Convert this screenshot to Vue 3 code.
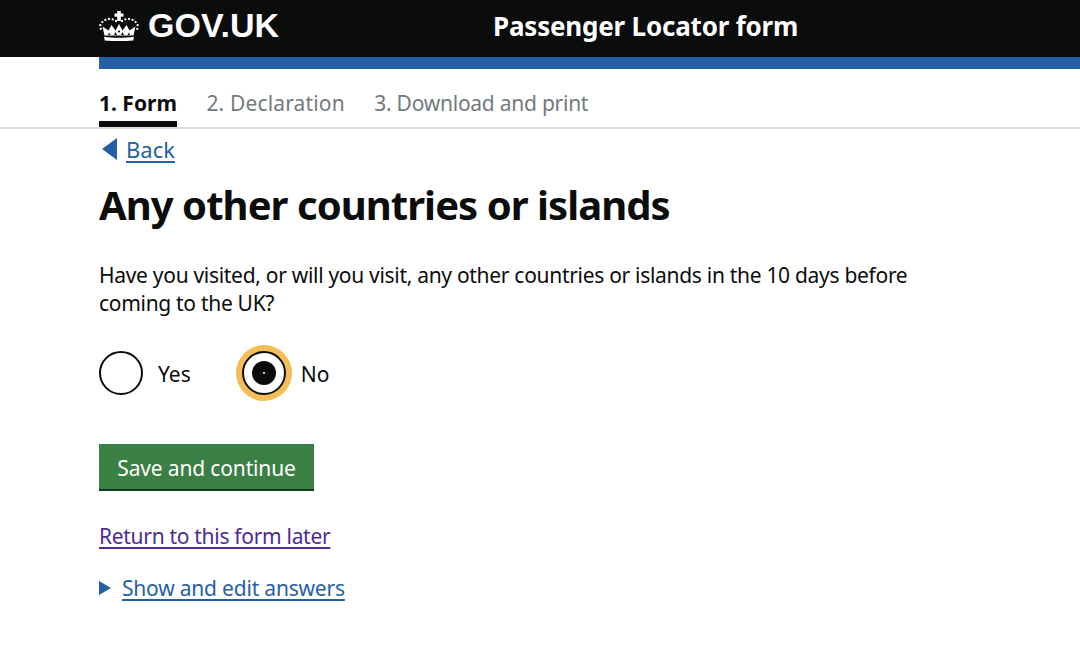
<template>
  <div class="page">
    <header class="topbar">
      <div class="topbar__inner">
        <a class="logo">
          <svg class="logo__crown" viewBox="0 0 40 30" width="40" height="30">
            <g fill="#fff">
              <rect x="18.200" y="0" width="3.600" height="10" />
              <rect x="15.500" y="2.500" width="9" height="3.200" />
              <path d="M5.500 24.500 3.500 15.500l6 4 3-5.500 4 5.500 3.500-6.500 3.500 6.500 4-5.500 3 5.500 6-4-2 9z" />
              <path d="M5 25.800c4.500.8 9.500 1 15 1s10.500-.2 15-1l-.8 3.700c-4 .4-9 .5-14.200.5s-10.200-.1-14.200-.5z" />
            </g>
            <g fill="#0b0c0c">
              <path d="M9 24l1-2.500 1.500 2.500zM15 24l1.500-3 1.500 3zM22 24l1.500-3 1.500 3zM28.500 24l1.500-2.500 1 2.500z" />
              <circle cx="20" cy="20.500" r="1.100" />
            </g>
            <g fill="none" stroke="#fff" stroke-width="2.300" stroke-linecap="round" stroke-dasharray="0 3.700">
              <path d="M17 10C12 6.500 5 7.500 1.500 13.500 1 16 1.500 18 3 20" />
              <path d="M23 10c5-3.500 12-2.500 15.500 3.500.5 2.500 0 4.500-1.500 6.500" />
            </g>
          </svg>
          <span class="logo__text">GOV.UK</span>
        </a>
        <span class="service">Passenger Locator form</span>
      </div>
    </header>
    <div class="bluebar"></div>

    <nav class="steps">
      <span
        v-for="step in steps"
        :key="step.id"
        class="steps__item"
        :class="{ 'steps__item--active': step.id === 1 }"
      >{{ step.id }}. {{ step.title }}</span>
    </nav>

    <main class="content">
      <a class="back">
        <span class="back__arrow"></span>
        <span class="link">Back</span>
      </a>
      <h1 class="title">Any other countries or islands</h1>
      <p class="question">
        Have you visited, or will you visit, any other countries or islands in the 10 days before
        coming to the UK?
      </p>

      <div class="radios">
        <label class="radio">
          <span class="radio__circle"></span>
          <span class="radio__label">Yes</span>
        </label>
        <label class="radio radio--checked">
          <span class="radio__circle"><span class="radio__dot"></span></span>
          <span class="radio__label">No</span>
        </label>
      </div>

      <button type="button" class="save">Save and continue</button>

      <a class="link link--visited later">Return to this form later</a>

      <div class="answers">
        <span class="answers__arrow"></span>
        <a class="link">Show and edit answers</a>
      </div>
    </main>
  </div>
</template>

<script setup>
const steps = [
  { id: 1, title: 'Form' },
  { id: 2, title: 'Declaration' },
  { id: 3, title: 'Download and print' }
];
</script>

<style>
html,
body {
  margin: 0;
  background: #fff;
}
</style>

<style scoped>
.page {
  width: 1080px;
  height: 648px;
  overflow: hidden;
  font-family: "Noto Sans", "Liberation Sans", sans-serif;
  color: #0b0c0c;
}

.topbar {
  height: 57px;
  background: #0b0c0c;
  color: #fff;
}

.topbar__inner {
  display: flex;
  align-items: center;
  height: 51px;
  padding-left: 99px;
}

.logo {
  display: flex;
  align-items: center;
  gap: 9px;
}

.logo__text {
  font-family: "Liberation Sans", Arial, sans-serif;
  font-size: 34px;
  font-weight: 700;
}

.service {
  margin-left: 214px;
  font-size: 26px;
  font-weight: 700;
  letter-spacing: -0.2px;
}

.bluebar {
  height: 12px;
  margin-left: 99px;
  background: #2460a6;
}

.steps {
  display: flex;
  gap: 29.5px;
  height: 60px;
  box-sizing: border-box;
  padding-left: 99px;
  border-bottom: 2px solid #dcdcdc;
}

.steps__item {
  height: 58px;
  box-sizing: border-box;
  padding-top: 19px;
  font-size: 21px;
  line-height: 30px;
  color: #737a7d;
  letter-spacing: 0.15px;
}

.steps__item:nth-child(3) {
  letter-spacing: -0.25px;
}

.steps__item--active {
  font-weight: 700;
  color: #0b0c0c;
  letter-spacing: 0;
  border-bottom: 6px solid #0b0c0c;
}

.content {
  padding-left: 99px;
}

.back {
  display: flex;
  align-items: center;
  height: 40px;
  font-size: 22px;
}

.back__arrow {
  width: 0;
  height: 0;
  margin: 0 9px 0 3px;
  border-top: 11px solid transparent;
  border-bottom: 11px solid transparent;
  border-right: 15px solid #2460a6;
}

.link {
  color: #2460a6;
  text-decoration: underline;
  text-decoration-thickness: 2px;
  text-underline-offset: 3px;
}

.link--visited {
  color: #4c2c92;
}

.title {
  margin: 11px 0 0;
  font-size: 40px;
  line-height: 50px;
  font-weight: 700;
  letter-spacing: -0.95px;
}

.question {
  width: 830px;
  margin: 31px 0 0;
  font-size: 21px;
  line-height: 28px;
  letter-spacing: -0.3px;
}

.radios {
  display: flex;
  gap: 51px;
  align-items: center;
  margin-top: 27px;
  height: 58px;
}

.radio {
  display: flex;
  align-items: center;
  gap: 15px;
  font-size: 21px;
}

.radio__label {
  padding-top: 1px;
}

.radio__circle {
  display: flex;
  align-items: center;
  justify-content: center;
  width: 44px;
  height: 44px;
  box-sizing: border-box;
  border: 2px solid #0b0c0c;
  border-radius: 50%;
  background: #fff;
}

.radio--checked .radio__circle {
  box-shadow: 0 0 0 6px #f5bd58;
}

.radio__dot {
  position: relative;
  width: 24px;
  height: 24px;
  border-radius: 50%;
  background: #0b0c0c;
}

.radio__dot::after {
  content: "";
  position: absolute;
  left: 11px;
  top: 11px;
  width: 2px;
  height: 2px;
  border-radius: 50%;
  background: #fff;
}

.save {
  display: block;
  width: 215px;
  height: 47px;
  margin-top: 42px;
  padding: 2px 0 0;
  border: 0;
  border-bottom: 2px solid #0f3a1d;
  background: #3a8044;
  color: #fff;
  font-family: inherit;
  font-size: 21px;
  letter-spacing: -0.15px;
}

.later {
  display: block;
  width: fit-content;
  margin-top: 30px;
  font-size: 21px;
  line-height: 30px;
  letter-spacing: -0.3px;
}

.answers {
  display: flex;
  align-items: center;
  gap: 11px;
  margin-top: 22px;
  font-size: 21px;
  line-height: 30px;
  letter-spacing: -0.2px;
}

.answers__arrow {
  width: 0;
  height: 0;
  border-top: 7px solid transparent;
  border-bottom: 7px solid transparent;
  border-left: 12px solid #2460a6;
}
</style>
